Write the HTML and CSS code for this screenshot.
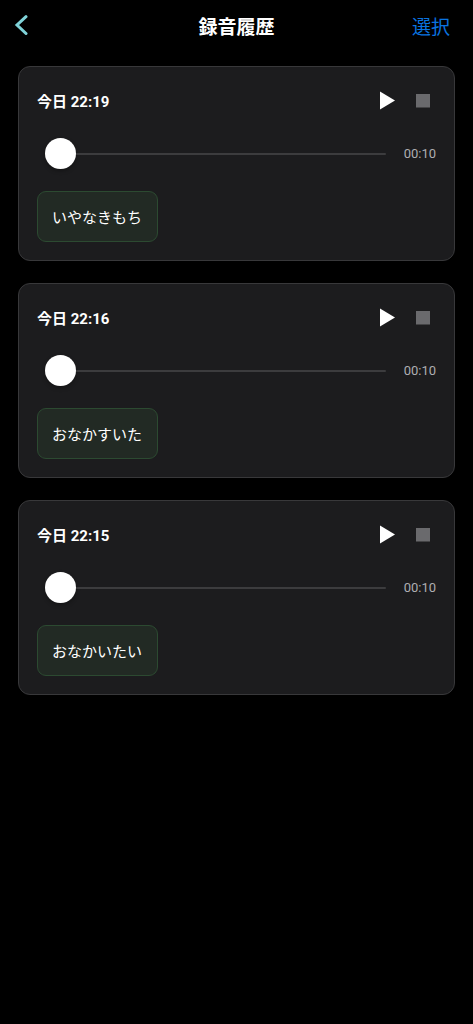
FILE: index.html
```html
<!DOCTYPE html>
<html lang="ja">
  <head>
    <meta charset="utf-8" />
    <title>録音履歴</title>
    <meta name="viewport" content="width=device-width, initial-scale=1.0" />
    <link rel="stylesheet" href="styles.css">
  </head>

  <body>
    <header class="topbar">
      <button class="back" aria-label="戻る">
        <svg width="14" height="22" viewBox="0 0 14 22">
          <path d="M12 1.7L3 10L12 18.5" fill="none" stroke="#7fd2d8" stroke-width="3" stroke-linecap="round" stroke-linejoin="miter"/>
        </svg>
      </button>
      <h1>録音履歴</h1>
      <button class="select">選択</button>
    </header>

    <main class="list">
      <article class="card">
        <div class="card-head">
          <h2>今日 22:19</h2>
          <div class="controls">
            <button aria-label="再生"><svg width="16" height="20" viewBox="0 0 16 20"><path d="M0 0.5L15 9.5L0 18.5Z" fill="#fff"/></svg></button>
            <button aria-label="停止" disabled><svg width="14" height="14" viewBox="0 0 14 14"><path d="M0 0H14V13.5H0Z" fill="#6a6a6d"/></svg></button>
          </div>
        </div>
        <div class="player">
          <input type="range" min="0" max="10" value="0" aria-label="再生位置" />
          <span class="time">00:10</span>
        </div>
        <span class="tag">いやなきもち</span>
      </article>

      <article class="card">
        <div class="card-head">
          <h2>今日 22:16</h2>
          <div class="controls">
            <button aria-label="再生"><svg width="16" height="20" viewBox="0 0 16 20"><path d="M0 0.5L15 9.5L0 18.5Z" fill="#fff"/></svg></button>
            <button aria-label="停止" disabled><svg width="14" height="14" viewBox="0 0 14 14"><path d="M0 0H14V13.5H0Z" fill="#6a6a6d"/></svg></button>
          </div>
        </div>
        <div class="player">
          <input type="range" min="0" max="10" value="0" aria-label="再生位置" />
          <span class="time">00:10</span>
        </div>
        <span class="tag">おなかすいた</span>
      </article>

      <article class="card">
        <div class="card-head">
          <h2>今日 22:15</h2>
          <div class="controls">
            <button aria-label="再生"><svg width="16" height="20" viewBox="0 0 16 20"><path d="M0 0.5L15 9.5L0 18.5Z" fill="#fff"/></svg></button>
            <button aria-label="停止" disabled><svg width="14" height="14" viewBox="0 0 14 14"><path d="M0 0H14V13.5H0Z" fill="#6a6a6d"/></svg></button>
          </div>
        </div>
        <div class="player">
          <input type="range" min="0" max="10" value="0" aria-label="再生位置" />
          <span class="time">00:10</span>
        </div>
        <span class="tag">おなかいたい</span>
      </article>
    </main>
  </body>
</html>
```

FILE: styles.css
```css
* {
  box-sizing: border-box;
}
body {
  margin: 0;
  background: #000;
  color: #fff;
  font-family: Roboto, 'Noto Sans CJK JP', sans-serif;
}
h1, h2 {
  margin: 0;
}
button {
  padding: 0;
  border: 0;
  background: none;
  color: inherit;
  font: inherit;
  cursor: pointer;
}
svg {
  display: block;
}

/* top bar */
.topbar {
  display: grid;
  grid-template-columns: 1fr auto 1fr;
  align-items: center;
  height: 52px;
  padding: 0 23px 0 14px;
}
.topbar h1 {
  padding: 3px 0 0 9px;
  font-size: 19px;
  line-height: 28px;
  font-weight: 700;
}
.back {
  justify-self: start;
}
.select {
  justify-self: end;
  padding-top: 3px;
  color: #0a74e0;
  font-size: 19px;
  line-height: 28px;
}

/* recordings */
.list {
  display: flex;
  flex-direction: column;
  gap: 22px;
  padding: 14px 18px;
}
.card {
  display: flex;
  flex-direction: column;
  align-items: flex-start;
  padding: 18px;
  background: #1c1c1e;
  border: 1px solid #38383a;
  border-radius: 12px;
}
.card-head,
.player {
  display: flex;
  align-items: center;
  justify-content: space-between;
  width: 100%;
}
.card-head {
  height: 32px;
}
.card-head h2 {
  padding-top: 2px;
  font-size: 15px;
  line-height: 24px;
  font-weight: 700;
}
.controls {
  display: flex;
  align-items: center;
  gap: 20px;
  padding-right: 6px;
}
.player {
  gap: 18px;
  margin: 21px 0 22px;
  padding-left: 8px;
}
.player input {
  flex: 1;
  min-width: 0;
  height: 31px;
  margin: 0;
  appearance: none;
  background: none;
}
.player input::-webkit-slider-runnable-track {
  height: 2px;
  border-radius: 1px;
  background: #3c3c3e;
}
.player input::-webkit-slider-thumb {
  appearance: none;
  width: 31px;
  height: 31px;
  margin-top: -15px;
  border-radius: 50%;
  background: #fff;
  box-shadow: 0 2px 4px rgba(0, 0, 0, 0.3);
}
.time {
  color: #aeaeb2;
  font-size: 13px;
  line-height: 16px;
}
.tag {
  padding: 14px 15px 11px 14px;
  background: #222a24;
  border: 1px solid #2c4a31;
  border-radius: 9px;
  font-size: 15px;
  line-height: 24px;
}
```
